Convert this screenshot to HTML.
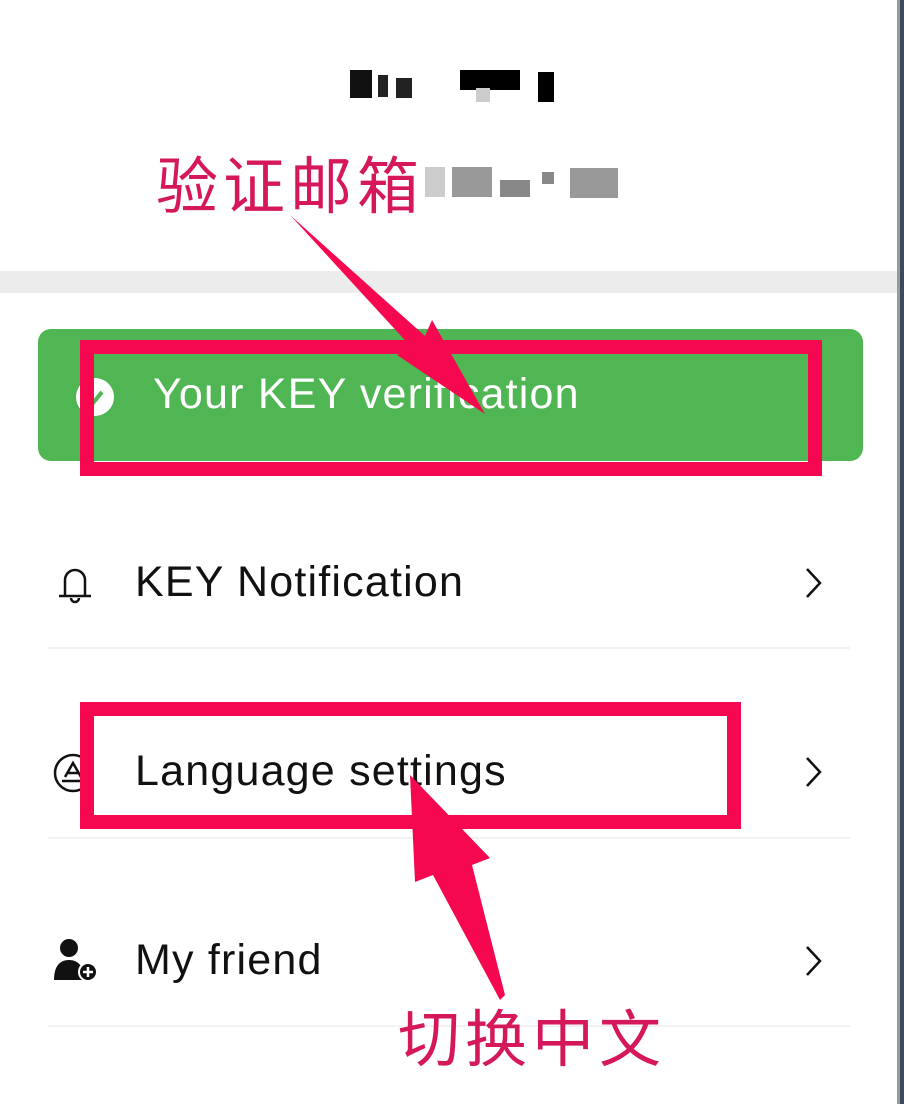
<!DOCTYPE html>
<html><head><meta charset="utf-8"><style>
*{margin:0;padding:0;box-sizing:border-box}
body{width:904px;height:1104px;background:#fff;position:relative;overflow:hidden;font-family:"Liberation Sans","Noto Sans CJK SC",sans-serif}
.a{position:absolute}
.row{position:absolute;left:135px;font-size:43px;color:#111;line-height:1;letter-spacing:1.2px}
.div{position:absolute;left:48px;width:802px;height:2px;background:#f2f2f2}
.chev{position:absolute;left:800px}
.cn{position:absolute;color:#d5185b;font-size:62px;font-family:"Noto Sans CJK SC",sans-serif;line-height:1;letter-spacing:5px}
</style></head><body>
<div class="a" style="left:900px;top:0;width:4px;height:1104px;background:#3a4a60"></div>
<div class="a" style="left:897px;top:0;width:3px;height:1104px;background:#9a9a9a"></div>
<div class="a" style="left:350px;top:70px;width:22px;height:28px;background:#111"></div>
<div class="a" style="left:378px;top:75px;width:10px;height:22px;background:#222"></div>
<div class="a" style="left:396px;top:78px;width:16px;height:20px;background:#222"></div>
<div class="a" style="left:460px;top:70px;width:60px;height:20px;background:#000"></div>
<div class="a" style="left:476px;top:88px;width:14px;height:14px;background:#ccc"></div>
<div class="a" style="left:538px;top:72px;width:16px;height:30px;background:#000"></div>
<div class="a" style="left:425px;top:167px;width:20px;height:30px;background:#ccc"></div>
<div class="a" style="left:452px;top:167px;width:40px;height:30px;background:#999"></div>
<div class="a" style="left:500px;top:180px;width:30px;height:17px;background:#888"></div>
<div class="a" style="left:542px;top:172px;width:12px;height:12px;background:#888"></div>
<div class="a" style="left:570px;top:168px;width:48px;height:30px;background:#999"></div>
<div class="cn" style="left:156px;top:150px">验证邮箱</div>
<div class="a" style="left:0;top:271px;width:897px;height:22px;background:#ececec"></div>
<div class="a" style="left:38px;top:329px;width:825px;height:132px;background:#4fb653;border-radius:13px"></div>
<div class="a" style="left:76px;top:378px;width:38px;height:38px;border-radius:50%;background:#fff"></div>
<svg class="a" style="left:76px;top:378px" width="38" height="38"><path d="M12 20l5 5 9-11" stroke="#4fb653" stroke-width="4" fill="none"/></svg>
<div class="a" style="left:153px;top:373px;font-size:43px;color:#fff;line-height:1;letter-spacing:1.2px">Your KEY verification</div>
<div class="a" style="left:80px;top:340px;width:742px;height:136px;border:14px solid #f5084f"></div>
<svg class="a" style="left:54px;top:563px" width="42" height="42" viewBox="0 0 42 42"><path d="M11 33V17a10 10 0 0 1 20 0v16M5 33h32M17 35a4 4 0 0 0 8 0" stroke="#111" stroke-width="2.5" fill="none"/></svg>
<div class="row" style="top:561px">KEY Notification</div>
<svg class="chev" style="top:566px" width="30" height="34"><path d="M7 3l13 14-13 14" stroke="#111" stroke-width="2.5" fill="none"/></svg>
<div class="div" style="top:647px"></div>
<svg class="a" style="left:52px;top:751px" width="44" height="44" viewBox="0 0 44 44"><circle cx="21" cy="22" r="18" stroke="#111" stroke-width="2.5" fill="none"/><path d="M13 26l8-14 8 14M15 22h12M10 30h22" stroke="#111" stroke-width="2.5" fill="none"/></svg>
<div class="row" style="top:750px">Language settings</div>
<svg class="chev" style="top:755px" width="30" height="34"><path d="M7 3l13 14-13 14" stroke="#111" stroke-width="2.5" fill="none"/></svg>
<div class="div" style="top:837px"></div>
<svg class="a" style="left:52px;top:938px" width="48" height="46" viewBox="0 0 48 46"><circle cx="17" cy="10" r="9" fill="#111"/><path d="M2 42c0-14 6-20 15-20s15 6 15 20z" fill="#111"/><circle cx="36" cy="34" r="9" fill="#111" stroke="#fff" stroke-width="2"/><path d="M36 29v10M31 34h10" stroke="#fff" stroke-width="2.5"/></svg>
<div class="row" style="top:939px">My friend</div>
<svg class="chev" style="top:944px" width="30" height="34"><path d="M7 3l13 14-13 14" stroke="#111" stroke-width="2.5" fill="none"/></svg>
<div class="div" style="top:1025px"></div>
<div class="a" style="left:80px;top:702px;width:661px;height:127px;border:14px solid #f5084f"></div>
<svg class="a" style="left:0;top:0" width="904" height="1104">
<path d="M290 215L425 336 432 320 485 414 397 355 413 349Z" fill="#f5084f"/>
<path d="M505 995L472 865 490 858 410 775 415 882 433 875 500 1000Z" fill="#f5084f"/>
</svg>
<div class="cn" style="left:398px;top:1003px">切换中文</div>
</body></html>
